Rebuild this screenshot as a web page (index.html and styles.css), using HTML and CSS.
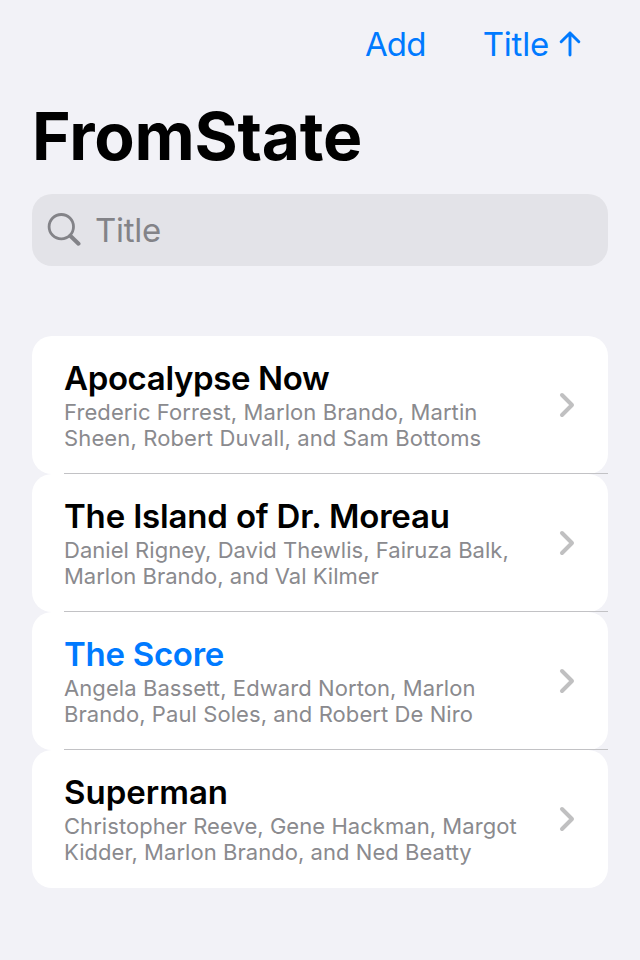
FILE: index.html
```html
<!DOCTYPE html>
<html lang="en">
<head>
<meta charset="utf-8">
<title>FromState</title>
<link rel="stylesheet" href="styles.css">
</head>
<body>
<nav class="bar">
  <a class="add">Add</a>
  <a class="sort"><span>Title</span><svg width="22" height="26" viewBox="0 0 22 26"><path d="M11 24V2M2.200 10.800L11 2l8.800 8.800"/></svg></a>
</nav>
<h1><span>FromState</span></h1>
<div class="search">
  <svg width="34" height="34" viewBox="0 0 34 34"><circle cx="14.300" cy="13.700" r="12.200"/><path class="handle" d="M23.500 23l8 7.700"/></svg>
  <span>Title</span>
</div>
<main class="list">
  <section class="row">
    <div><h2 class="t1">Apocalypse Now</h2><p><span class="a1">Frederic Forrest, Marlon Brando, Martin</span><br><span class="b1">Sheen, Robert Duvall, and Sam Bottoms</span></p></div>
    <svg class="chev" width="16" height="26" viewBox="0 0 16 26"><path d="M3 3l10 10L3 23"/></svg>
  </section>
  <section class="row">
    <div><h2 class="t2">The Island of Dr. Moreau</h2><p><span class="a2">Daniel Rigney, David Thewlis, Fairuza Balk,</span><br><span class="b2">Marlon Brando, and Val Kilmer</span></p></div>
    <svg class="chev" width="16" height="26" viewBox="0 0 16 26"><path d="M3 3l10 10L3 23"/></svg>
  </section>
  <section class="row">
    <div><h2 class="t3 active">The Score</h2><p><span class="a3">Angela Bassett, Edward Norton, Marlon</span><br><span class="b3">Brando, Paul Soles, and Robert De Niro</span></p></div>
    <svg class="chev" width="16" height="26" viewBox="0 0 16 26"><path d="M3 3l10 10L3 23"/></svg>
  </section>
  <section class="row">
    <div><h2 class="t4">Superman</h2><p><span class="a4">Christopher Reeve, Gene Hackman, Margot</span><br><span class="b4">Kidder, Marlon Brando, and Ned Beatty</span></p></div>
    <svg class="chev" width="16" height="26" viewBox="0 0 16 26"><path d="M3 3l10 10L3 23"/></svg>
  </section>
</main>
</body>
</html>
```
FILE: styles.css
```css
* { box-sizing: border-box; }
body { margin: 0; height: 960px; background: #f2f2f7; color: #000; font-family: Inter, sans-serif; overflow: hidden; }
svg { fill: none; stroke-linecap: round; stroke-linejoin: round; flex: none; }
.bar { height: 88px; padding-right: 59px; display: flex; justify-content: flex-end; align-items: center; gap: 57px; color: #007aff; font-size: 33px; }
.add { letter-spacing: -.8px; }
.sort { display: flex; align-items: center; gap: 10px; letter-spacing: -.2px; }
.sort svg { stroke: #007aff; stroke-width: 2.900; }
h1 { margin: 0; padding-left: 32px; height: 106px; line-height: 96px; font-size: 66px; font-weight: 700; letter-spacing: -.25px; }
.search { margin: 0 32px; height: 72px; border-radius: 20px; background: #e3e3e8; color: #838388; display: flex; align-items: center; padding-left: 15px; gap: 14px; font-size: 33px; letter-spacing: -.25px; }
.search svg { stroke: #838388; stroke-width: 2.800; }
.search .handle { stroke-width: 4; }
.list { margin: 70px 32px 0; }
.row { position: relative; height: 138px; border-radius: 20px; background: #fff; display: flex; justify-content: space-between; padding: 24px 33px 0 32px; }
.row:not(:last-child)::after { content: ""; position: absolute; left: 32px; right: 0; bottom: 0; height: 1px; background: #c2c2c5; }
h2 { margin: 0; height: 39px; line-height: 37px; font-size: 33px; font-weight: 600; white-space: nowrap; }
.t1 { letter-spacing: -.36px; }
.t2 { letter-spacing: -.17px; }
.t3 { letter-spacing: -.28px; }
.t4 { letter-spacing: 0; }
.active { color: #007aff; }
p { margin: 0; font-size: 22px; line-height: 26px; color: #8a8a8e; white-space: nowrap; }
.a1, .a3, .b3 { letter-spacing: .08px; }
.b1 { letter-spacing: .13px; }
.a2 { letter-spacing: .03px; }
.a4, .b4 { letter-spacing: .05px; }
.chev { margin-top: 32px; stroke: #c0c0c1; stroke-width: 4; }
```
